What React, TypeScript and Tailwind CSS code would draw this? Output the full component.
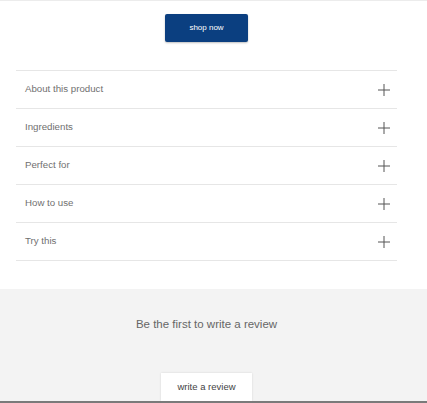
import React from "react";

const rows = ["About this product", "Ingredients", "Perfect for", "How to use", "Try this"];

function Plus() {
  return (
    <svg width="12" height="12" viewBox="0 0 12 12" className="block">
      <path d="M6 0v12M0 6h12" stroke="#555" strokeWidth="1" fill="none" />
    </svg>
  );
}

export default function App() {
  return (
    <div className="w-[427px] h-[403px] overflow-hidden bg-white flex flex-col" style={{ fontFamily: '"Liberation Sans", Arial, sans-serif' }}>
      <div className="h-px bg-[#ececec]" />
      <div className="w-[413px] flex justify-center pt-[13px]">
        <button className="w-[83px] h-[28px] bg-[#0b3f80] text-white text-[8px] rounded-[2px] shadow-[0_1px_2px_rgba(0,0,0,0.25)]">
          shop now
        </button>
      </div>
      <div className="mt-[28px] ml-[16px] w-[381px] border-t border-[#e6e6e6]">
        {rows.map((r) => (
          <div key={r} className="h-[38px] border-b border-[#e6e6e6] flex items-center justify-between pl-[9px] pr-[7px]">
            <span className="text-[9.7px] text-[#707070]">{r}</span>
            <Plus />
          </div>
        ))}
      </div>
      <div className="mt-[28px] flex-1 bg-[#f3f3f3] flex flex-col">
        <div className="w-[413px] flex flex-col items-center flex-1">
          <div className="mt-[27px] text-[11.5px] text-[#666]">Be the first to write a review</div>
          <div className="mt-auto">
            <button className="w-[91px] h-[28px] bg-white text-[9.5px] text-[#444] shadow-[0_0_2px_rgba(0,0,0,0.12)]">
              write a review
            </button>
          </div>
        </div>
        <div className="w-full h-[2px] bg-[#7a7a7a]" />
      </div>
    </div>
  );
}
